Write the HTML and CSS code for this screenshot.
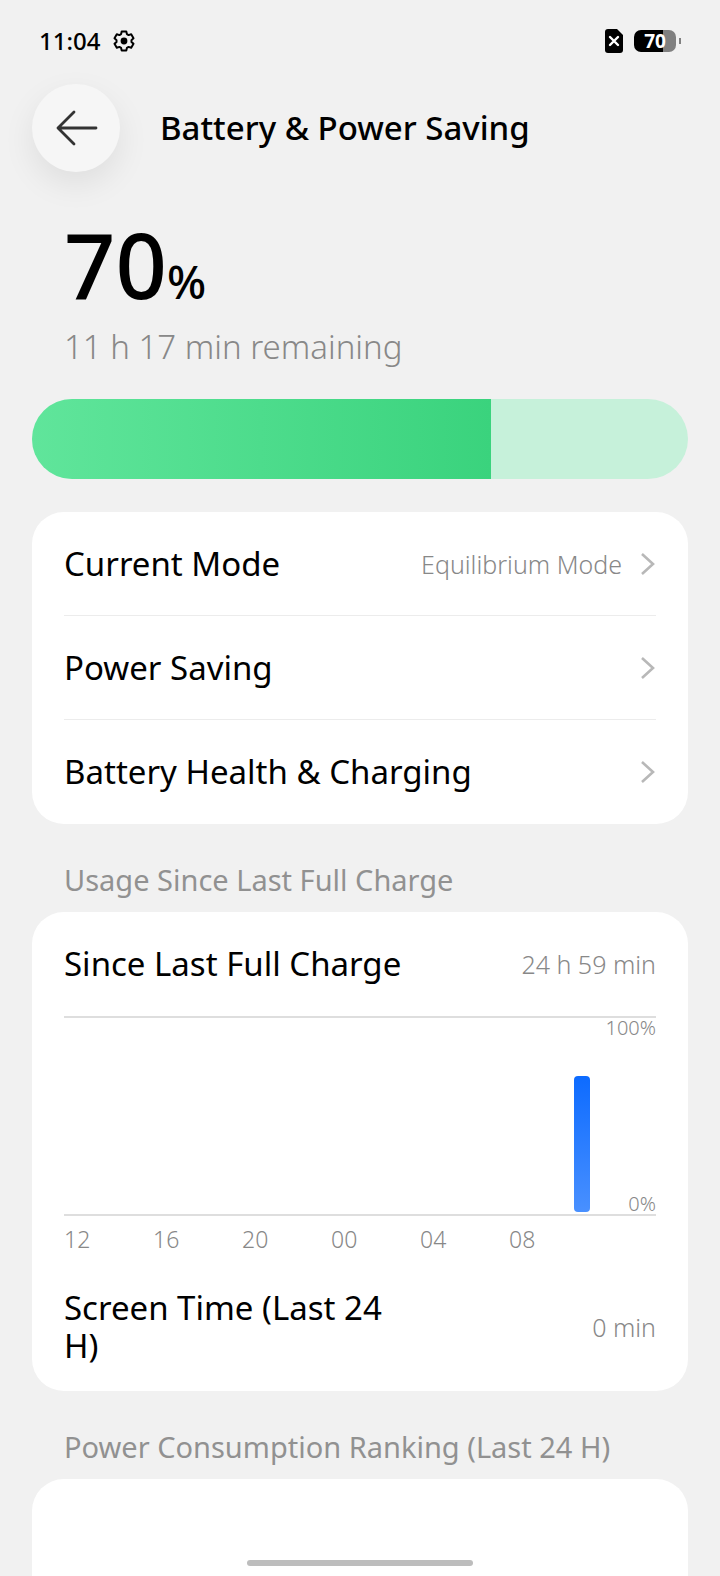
FILE: index.html
```html
<!DOCTYPE html>
<html lang="en">
<head>
  <meta charset="UTF-8">
  <meta name="viewport" content="width=device-width, initial-scale=1.0">
  <title>Battery &amp; Power Saving</title>
  <link rel="stylesheet" href="styles.css">
</head>
<body>

<div class="status-bar">
  <span class="time">11:04</span>
  <svg class="gear" width="22" height="22" viewBox="0 0 22 22">
    <path d="M8.7 1.4h4.6l.6 2.7 1.7 1 2.6-.8 2.3 3.9-2 1.9v1.8l2 1.9-2.3 3.9-2.6-.8-1.7 1-.6 2.7H8.7l-.6-2.7-1.7-1-2.6.8-2.3-3.9 2-1.9v-1.8l-2-1.9 2.3-3.9 2.6.8 1.7-1z" fill="none" stroke="#000" stroke-width="2" stroke-linejoin="round"/>
    <circle cx="11" cy="11" r="3.4"/>
  </svg>
  <svg class="sim" width="18" height="24" viewBox="0 0 18 24">
    <path d="M3 0h9l6 6v15a3 3 0 0 1-3 3H3a3 3 0 0 1-3-3V3a3 3 0 0 1 3-3z"/>
    <path d="M5 8l8 8M13 8l-8 8" stroke="#fff" stroke-width="2.4" stroke-linecap="round"/>
  </svg>
  <div class="battery"><span>70</span></div>
  <div class="battery-tip"></div>
</div>

<header class="header">
  <button class="back" type="button" aria-label="Back">
    <svg width="44" height="40" viewBox="0 0 44 40">
      <path d="M42 20H4M20 4L4 20l16 16" fill="none" stroke="#333" stroke-width="2.8" stroke-linecap="round" stroke-linejoin="round"/>
    </svg>
  </button>
  <h1>Battery &amp; Power Saving</h1>
</header>

<main>
  <div class="level"><strong>70</strong><span>%</span></div>
  <p class="remaining">11 h 17 min remaining</p>
  <div class="level-bar" role="progressbar" aria-label="Battery level" aria-valuenow="70" aria-valuemin="0" aria-valuemax="100">
    <div class="level-fill" style="width: 70%"></div>
  </div>

  <nav class="card">
    <a class="row" href="#">
      <span>Current Mode</span>
      <span class="value">Equilibrium Mode</span>
      <svg class="chevron" width="16" height="24" viewBox="0 0 16 24"><path d="M2 2l11 10L2 22"/></svg>
    </a>
    <a class="row" href="#">
      <span>Power Saving</span>
      <svg class="chevron" width="16" height="24" viewBox="0 0 16 24"><path d="M2 2l11 10L2 22"/></svg>
    </a>
    <a class="row" href="#">
      <span>Battery Health &amp; Charging</span>
      <svg class="chevron" width="16" height="24" viewBox="0 0 16 24"><path d="M2 2l11 10L2 22"/></svg>
    </a>
  </nav>

  <h2>Usage Since Last Full Charge</h2>
  <section class="card">
    <div class="row">
      <span>Since Last Full Charge</span>
      <span class="value">24 h 59 min</span>
    </div>
    <div class="chart">
      <div class="bars"><div class="bar" style="height: 70%"></div></div>
      <div class="scale"><span>100%</span><span>0%</span></div>
    </div>
    <div class="hours">
      <span>12</span><span>16</span><span>20</span><span>00</span><span>04</span><span>08</span>
    </div>
    <div class="row screen-time">
      <span class="name">Screen Time (Last 24 H)</span>
      <span class="value">0 min</span>
    </div>
  </section>

  <h2>Power Consumption Ranking (Last 24 H)</h2>
  <section class="card ranking"></section>
</main>

<div class="home-indicator"></div>

</body>
</html>
```
FILE: styles.css
```css
* { box-sizing: border-box; }
body { font-family: "Noto Sans", "Open Sans", sans-serif; background-color: #f1f1f1; color: #000; margin: 0; min-height: 100vh; display: flex; flex-direction: column; }
h1, h2, p { margin: 0; font-weight: 400; }

.status-bar { display: flex; align-items: center; height: 84px; padding: 0 39px 2px; }
.time { font-size: 24px; line-height: 32px; font-weight: 500; }
.gear { margin-left: 13px; }
.sim { margin-left: auto; margin-right: 11px; }
.battery { width: 42px; height: 22px; border-radius: 7px; background: linear-gradient(to right, #000 70%, #808080 70%); color: #fff; font-size: 19px; line-height: 22px; font-weight: 700; text-align: center; }
.battery-tip { width: 2px; height: 6px; margin-left: 3px; background-color: #808080; }

.header { display: flex; align-items: center; gap: 40px; padding: 0 32px; }
.back { width: 88px; height: 88px; border: none; border-radius: 50%; padding: 0; background-color: #f6f6f6; box-shadow: 0 12px 32px rgba(0, 0, 0, 0.08); display: flex; align-items: center; justify-content: center; cursor: pointer; }
h1 { font-size: 33px; line-height: 40px; font-weight: 500; }

main { flex: 1; display: flex; flex-direction: column; padding: 0 32px; }
.level { padding: 48px 32px 0; display: flex; align-items: baseline; line-height: 88px; }
.level strong { font-size: 90px; font-weight: 500; }
.level span { font-size: 46px; font-weight: 500; }
.remaining { padding: 2px 32px 0; font-size: 33px; line-height: 40px; color: #888; font-weight: 300; }
.level-bar { height: 80px; margin-top: 32px; border-radius: 40px; overflow: hidden; background-color: #c6f1da; }
.level-fill { height: 100%; background: linear-gradient(to right, #60e59b, #3ad37d); }

.card { background-color: #fff; border-radius: 32px; padding: 0 32px; }
nav.card { margin-top: 33px; }
.row { display: flex; align-items: center; height: 104px; font-size: 33px; line-height: 38px; color: #000; text-decoration: none; }
a.row:not(:last-child) { border-bottom: 1px solid #ececec; }
.value { margin-left: auto; font-size: 25px; line-height: 32px; color: #888; font-weight: 300; }
.chevron { margin-left: auto; }
.value + .chevron { margin-left: 18px; }
.chevron path { fill: none; stroke: #b8b8b8; stroke-width: 2.6; }

h2 { padding: 36px 32px 12px; font-size: 29px; line-height: 40px; color: #919191; }

.chart { display: flex; height: 200px; border-top: 2px solid #dedede; border-bottom: 2px solid #dedede; }
.bars { flex: 1; display: flex; align-items: flex-end; justify-content: flex-end; padding-bottom: 2px; }
.bar { width: 16px; border-radius: 4px; background: linear-gradient(#0d6bff, #4990ff); }
.scale { width: 66px; display: flex; flex-direction: column; justify-content: space-between; text-align: right; font-size: 20px; line-height: 20px; color: #888; font-weight: 300; }
.hours { display: flex; padding-top: 7px; font-size: 23px; line-height: 32px; color: #888; font-weight: 300; }
.hours span { width: 89px; }
.screen-time { height: 136px; padding-top: 8px; }
.screen-time .name { width: 57%; }

.ranking { flex: 1; min-height: 97px; border-radius: 32px 32px 0 0; }

.home-indicator { position: fixed; bottom: 10px; left: 50%; width: 226px; height: 6px; margin-left: -113px; border-radius: 3px; background-color: #bdbdbd; }
```
